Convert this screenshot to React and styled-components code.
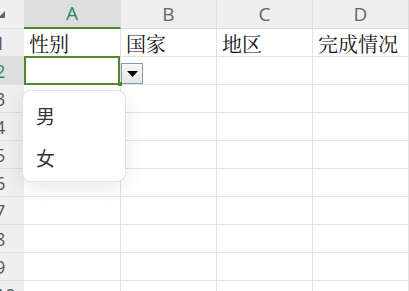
import React from "react";
import styled, { createGlobalStyle, css } from "styled-components";

const Global = createGlobalStyle`
  html, body { margin: 0; padding: 0; background: #fff; overflow: hidden; }
  * { box-sizing: border-box; }
`;

const Sheet = styled.div`
  position: relative;
  width: 409px;
  height: 291px;
  overflow: hidden;
  display: grid;
  grid-template-columns: 24px 97px 96px 96px 96px;
  grid-template-rows: 29px repeat(10, 28px);
  font-family: "Noto Serif CJK SC", "Noto Sans CJK SC", serif;
`;

const Corner = styled.div`
  display: flex;
  align-items: flex-start;
  padding-top: 11px;
  background: #efefef;
  border-bottom: 1px solid #dcdcdc;
`;

const ColHead = styled.div`
  display: flex;
  align-items: center;
  justify-content: center;
  font-family: "Open Sans", "Noto Sans", sans-serif;
  font-size: 19px;
  color: #666;
  background: #efefef;
  border-right: 1px solid #dcdcdc;
  border-bottom: 1px solid #dcdcdc;
  padding-bottom: 1px;
  ${(p) =>
    p.$active &&
    css`
      background: #dedede;
      color: #1f8c6c;
      border-bottom: 2px solid #4c8c2b;
    `}
`;

const RowHead = styled.div`
  display: flex;
  align-items: center;
  justify-content: flex-start;
  overflow: hidden;
  font-family: "Open Sans", "Noto Sans", sans-serif;
  font-size: 18px;
  color: #555;
  background: ${(p) => (p.$active ? "#dedede" : "#efefef")};
  border-bottom: 1px solid #dcdcdc;
  ${(p) => p.$active && css`color: #1f8c6c;`}
`;

const RowNum = styled.span`
  margin-left: -5px;
  line-height: 1;
`;

const Cell = styled.div`
  position: relative;
  display: flex;
  align-items: flex-end;
  padding: 0 0 2px 5px;
  font-size: 20px;
  line-height: 1;
  color: #111;
  white-space: nowrap;
  border-right: 1px solid #e2e2e2;
  border-bottom: 1px solid #e2e2e2;
  ${(p) =>
    p.$selected &&
    css`
      &::after {
        content: "";
        position: absolute;
        left: 0;
        top: -1px;
        right: 0;
        bottom: -1px;
        border: 2px solid #4c8c2b;
        pointer-events: none;
      }
      &::before {
        content: "";
        position: absolute;
        right: -2px;
        bottom: -2px;
        width: 4px;
        height: 4px;
        background: #4c8c2b;
        z-index: 1;
      }
    `}
  ${(p) =>
    p.$withButton &&
    css`
      padding: 0;
      align-items: flex-end;
    `}
`;

const DropButton = styled.div`
  width: 22px;
  height: 21px;
  border: 1px solid #7f9db9;
  background: linear-gradient(#f7f7f7, #e6e6e6);
  display: flex;
  align-items: center;
  justify-content: center;
`;

const Popup = styled.div`
  position: absolute;
  left: 22px;
  top: 90px;
  width: 104px;
  height: 92px;
  background: #fff;
  border: 1px solid #e3e3e3;
  border-radius: 9px;
  box-shadow: 0 6px 20px rgba(0, 0, 0, 0.09);
  padding-top: 3px;
  display: flex;
  flex-direction: column;
`;

const Option = styled.div`
  height: 42px;
  display: flex;
  align-items: center;
  padding-left: 13px;
  font-family: "Noto Sans CJK SC", sans-serif;
  font-size: 19px;
  color: #333;
`;

const cols = ["A", "B", "C", "D"];
const data = [["性别", "国家", "地区", "完成情况"]];

export default function App() {
  const rows = [];
  for (let r = 1; r <= 10; r++) {
    rows.push(
      <RowHead key={`h${r}`} $active={r === 2}>
        <RowNum>{r}</RowNum>
      </RowHead>
    );
    for (let c = 0; c < 4; c++) {
      const selected = r === 2 && c === 0;
      const withButton = r === 2 && c === 1;
      rows.push(
        <Cell key={`${r}-${c}`} $selected={selected} $withButton={withButton}>
          {withButton ? (
            <DropButton>
              <svg width="11" height="6" viewBox="0 0 11 6">
                <polygon points="0,0 11,0 5.5,6" fill="#000" />
              </svg>
            </DropButton>
          ) : (
            (data[r - 1] || [])[c] || ""
          )}
        </Cell>
      );
    }
  }
  return (
    <>
      <Global />
      <Sheet>
        <Corner>
          <svg width="6" height="8" viewBox="0 0 6 8">
            <polygon points="5,0 5,7 -2,7" fill="#666" />
          </svg>
        </Corner>
        {cols.map((c, i) => (
          <ColHead key={c} $active={i === 0}>
            {c}
          </ColHead>
        ))}
        {rows}
        <Popup>
          <Option>男</Option>
          <Option>女</Option>
        </Popup>
      </Sheet>
    </>
  );
}
